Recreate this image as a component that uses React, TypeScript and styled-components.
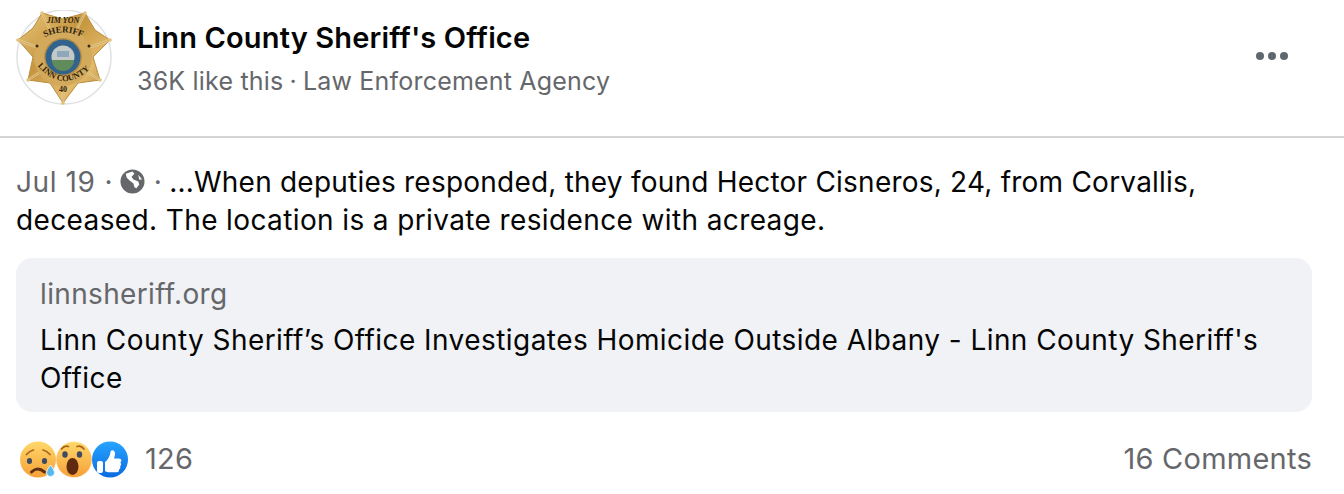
import React from "react";
import styled, { createGlobalStyle } from "styled-components";

const Global = createGlobalStyle`
  html, body { margin: 0; padding: 0; background: #fff; }
  body { font-family: Inter, "Liberation Sans", sans-serif; color: #050505; }
`;

const Page = styled.div`
  width: 1344px;
  height: 494px;
  overflow: hidden;
  display: flex;
  flex-direction: column;
`;

const Header = styled.header`
  height: 138px;
  box-sizing: border-box;
  border-bottom: 2px solid #d3d4d6;
  padding: 10px 56px 0 16px;
  display: flex;
  align-items: flex-start;
`;

const Avatar = styled.div`
  width: 96px;
  height: 96px;
  flex: none;
  margin-right: 25px;
  svg { display: block; }
`;

const Identity = styled.div`
  display: flex;
  flex-direction: column;
  padding-top: 8px;
  flex: 1;
`;

const PageName = styled.div`
  font-size: 29px;
  line-height: 40px;
  font-weight: 600;
  color: #050505;
  letter-spacing: 0.15px;
`;

const Meta = styled.div`
  font-size: 25px;
  line-height: 46px;
  color: #65676b;
  letter-spacing: 0.2px;
`;

const MetaDot = styled.span`
  margin: 0 6px;
`;

const More = styled.div`
  display: flex;
  gap: 4px;
  margin-top: 42px;
`;

const Dot = styled.span`
  width: 8px;
  height: 8px;
  border-radius: 50%;
  background: #606770;
`;

const Body = styled.section`
  padding: 25px 16px 0;
  font-size: 28px;
  line-height: 38px;
  color: #050505;
`;

const Line = styled.div<{ $spacing: number }>`
  letter-spacing: ${(p) => p.$spacing}px;
  white-space: nowrap;
`;

const Stamp = styled.span`
  color: #65676b;
  letter-spacing: 0.6px;
`;

const StampDot = styled.span`
  color: #65676b;
  margin: 0 7px 0 9px;
`;

const Globe = styled.svg`
  width: 25px;
  height: 25px;
  vertical-align: -2px;
`;

const LinkCard = styled.article`
  margin: 19px 32px 0 16px;
  height: 154px;
  box-sizing: border-box;
  padding: 17px 24px;
  background: #f0f2f5;
  border-radius: 16px;
`;

const Domain = styled.div`
  font-size: 28px;
  line-height: 38px;
  color: #65676b;
  letter-spacing: 0.35px;
`;

const LinkTitle = styled.div`
  font-size: 28px;
  line-height: 38px;
  margin-top: 8px;
  color: #050505;
  letter-spacing: 0.44px;
`;

const Footer = styled.footer`
  padding: 0 32px 0 20px;
  margin-top: 27px;
  display: flex;
  align-items: center;
  justify-content: space-between;
  color: #65676b;
  font-size: 29px;
  line-height: 40px;
  letter-spacing: 0.25px;
`;

const Reactions = styled.div`
  display: flex;
  align-items: center;
`;

const Emoji = styled.svg`
  width: 37px;
  height: 37px;
  display: block;
  margin-right: -1px;
`;

const Count = styled.span`
  margin-left: 17px;
`;

const BadgeStar = () => {
  const pts =
    "26,3 47,9 69,3 79,20 94,30 77,47 84,70 62,73 47,93 34,73 12,70 17,47 2,30 17,18";
  const tips = [[26, 3], [69, 3], [94, 30], [84, 70], [47, 93], [12, 70], [2, 30]];
  const serif = "Liberation Serif, serif";
  return (
    <svg width="96" height="96" viewBox="0 0 96 96">
      <defs>
        <linearGradient id="gold" x1="0" y1="0" x2="1" y2="1">
          <stop offset="0" stopColor="#eac67c" />
          <stop offset="0.4" stopColor="#c6963f" />
          <stop offset="0.7" stopColor="#e3bb6c" />
          <stop offset="1" stopColor="#a8792c" />
        </linearGradient>
        <filter id="soft"><feGaussianBlur stdDeviation="0.35" /></filter>
      </defs>
      <circle cx="48" cy="47" r="47" fill="#fff" stroke="#e0e1e4" strokeWidth="1.5" />
      <g filter="url(#soft)">
        <polygon points={pts} fill="url(#gold)" stroke="#b98d3f" strokeWidth="1" strokeLinejoin="round" />
        {tips.map((t, i) => (
          <g key={i}>
            <line x1="47" y1="47" x2={t[0]} y2={t[1]} stroke="#f3dca6" strokeWidth="2.500" opacity="0.65" />
            <line x1="47" y1="47" x2={t[0]} y2={t[1]} stroke="#8f6722" strokeWidth="0.700" opacity="0.5" />
            <circle cx={t[0]} cy={t[1]} r="1.800" fill="#e5c078" />
          </g>
        ))}
        <circle cx="47" cy="47" r="29" fill="#d3aa5c" />
        <circle cx="47" cy="47" r="19" fill="#b98f45" />
        <circle cx="47" cy="47" r="17.500" fill="#33648c" />
        <circle cx="47" cy="47" r="11.500" fill="#c3c9c6" />
        <path d="M36 50 h22 a11 11 0 0 1 -22 0z" fill="#5f8c5a" />
        <rect x="41" y="41" width="12" height="6" fill="#8ea7ba" />
        <circle cx="21" cy="36" r="1.500" fill="#3f2c0c" />
        <circle cx="73" cy="36" r="1.500" fill="#3f2c0c" />
      </g>
      <text x="47" y="12.500" textAnchor="middle" fontSize="8" fontWeight="700" fontStyle="italic" fontFamily={serif} fill="#2e220d">JIM YON</text>
      <path id="arcTop" d="M24 30 Q47 15 71 30" fill="none" />
      <text fontSize="9" fontWeight="700" fontFamily={serif} fill="#2e220d">
        <textPath href="#arcTop" startOffset="50%" textAnchor="middle">SHERIFF</textPath>
      </text>
      <path id="arcBot" d="M17 50 Q46 90 79 54" fill="none" />
      <text fontSize="8.500" fontWeight="700" fontFamily={serif} fill="#2e220d">
        <textPath href="#arcBot" startOffset="50%" textAnchor="middle">LINN COUNTY</textPath>
      </text>
      <text x="47" y="82" textAnchor="middle" fontSize="8" fontWeight="700" fontFamily={serif} fill="#2e220d">40</text>
    </svg>
  );
};

const SadFace = () => (
  <Emoji viewBox="0 0 37 37">
    <defs>
      <linearGradient id="face1" x1="0" y1="0" x2="0" y2="1">
        <stop offset="0" stopColor="#ffd86a" />
        <stop offset="1" stopColor="#f6a038" />
      </linearGradient>
    </defs>
    <circle cx="18" cy="18.500" r="18" fill="url(#face1)" />
    <path d="M6.500 13.500q3-3.500 7-4.500M23 9q4 1 7 4.500" stroke="#a9631f" strokeWidth="1.700" fill="none" strokeLinecap="round" />
    <ellipse cx="9.500" cy="20" rx="2.600" ry="3" fill="#3f4a63" />
    <ellipse cx="24.500" cy="20" rx="2.600" ry="3" fill="#3f4a63" />
    <path d="M11.500 31q6-6 13 0" stroke="#5f2f10" strokeWidth="3" fill="none" strokeLinecap="round" />
    <path d="M30.500 24q4 5 4 7.500a4 4 0 0 1-8 0q0-2.500 4-7.500z" fill="#58b8ee" stroke="#fff" strokeWidth="0.8" />
  </Emoji>
);

const WowFace = () => (
  <Emoji viewBox="0 0 37 37">
    <defs>
      <linearGradient id="face2" x1="0" y1="0" x2="0" y2="1">
        <stop offset="0" stopColor="#ffd86a" />
        <stop offset="1" stopColor="#f6a038" />
      </linearGradient>
    </defs>
    <circle cx="18" cy="18.500" r="18" fill="url(#face2)" stroke="#fff" strokeWidth="0.5" />
    <path d="M5.500 8q3-4 7-2.500M21 5.500q4-1.500 7 2.500" stroke="#a9631f" strokeWidth="1.700" fill="none" strokeLinecap="round" />
    <ellipse cx="9" cy="13.500" rx="2.700" ry="3.200" fill="#3f4a63" />
    <ellipse cx="23.500" cy="13.500" rx="2.700" ry="3.200" fill="#3f4a63" />
    <ellipse cx="16.500" cy="25.500" rx="6" ry="8.500" fill="#5f2a10" />
  </Emoji>
);

const LikeBadge = () => (
  <Emoji viewBox="0 0 37 37">
    <defs>
      <linearGradient id="like" x1="0" y1="0" x2="0" y2="1">
        <stop offset="0" stopColor="#28a4ff" />
        <stop offset="1" stopColor="#0a6be0" />
      </linearGradient>
    </defs>
    <circle cx="18" cy="18.500" r="18" fill="url(#like)" />
    <rect x="5" y="20" width="6" height="12" rx="2" fill="#fff" />
    <path d="M13 21c3-2 5-6 5.500-10 .3-2.500 4-2.500 4.500 1 .2 2-.5 4-1 5.500h5c2.800 0 3 3 1.300 4 1.300 1 1 3-.3 3.700.8 1 .4 2.800-1 3.200.3 1.400-.5 2.800-2.500 2.800h-7c-2 0-3-.6-4.500-1z" fill="#fff" />
  </Emoji>
);

export default function App() {
  return (
    <Page>
      <Global />
      <Header>
        <Avatar><BadgeStar /></Avatar>
        <Identity>
          <PageName>Linn County Sheriff's Office</PageName>
          <Meta>36K like this<MetaDot>·</MetaDot>Law Enforcement Agency</Meta>
        </Identity>
        <More><Dot /><Dot /><Dot /></More>
      </Header>
      <Body>
        <Line $spacing={0.22}>
          <Stamp>Jul 19</Stamp>
          <StampDot>·</StampDot>
          <Globe viewBox="0 0 26 26">
            <circle cx="13" cy="13" r="12.500" fill="#65676b" />
            <path d="M6 5l7-2.500 2 2.500-3 3 2 3 5 2 1 3-3 4-2-1-1-4-4-3-3-3zM19 6l4 5-3 0z" fill="#fff" />
          </Globe>
          <StampDot>·</StampDot>
          ...When deputies responded, they found Hector Cisneros, 24, from Corvallis,
        </Line>
        <Line $spacing={0.38}>deceased. The location is a private residence with acreage.</Line>
      </Body>
      <LinkCard>
        <Domain>linnsheriff.org</Domain>
        <LinkTitle>
          Linn County Sheriff’s Office Investigates Homicide Outside Albany - Linn County Sheriff's Office
        </LinkTitle>
      </LinkCard>
      <Footer>
        <Reactions>
          <SadFace />
          <WowFace />
          <LikeBadge />
          <Count>126</Count>
        </Reactions>
        <span>16 Comments</span>
      </Footer>
    </Page>
  );
}
